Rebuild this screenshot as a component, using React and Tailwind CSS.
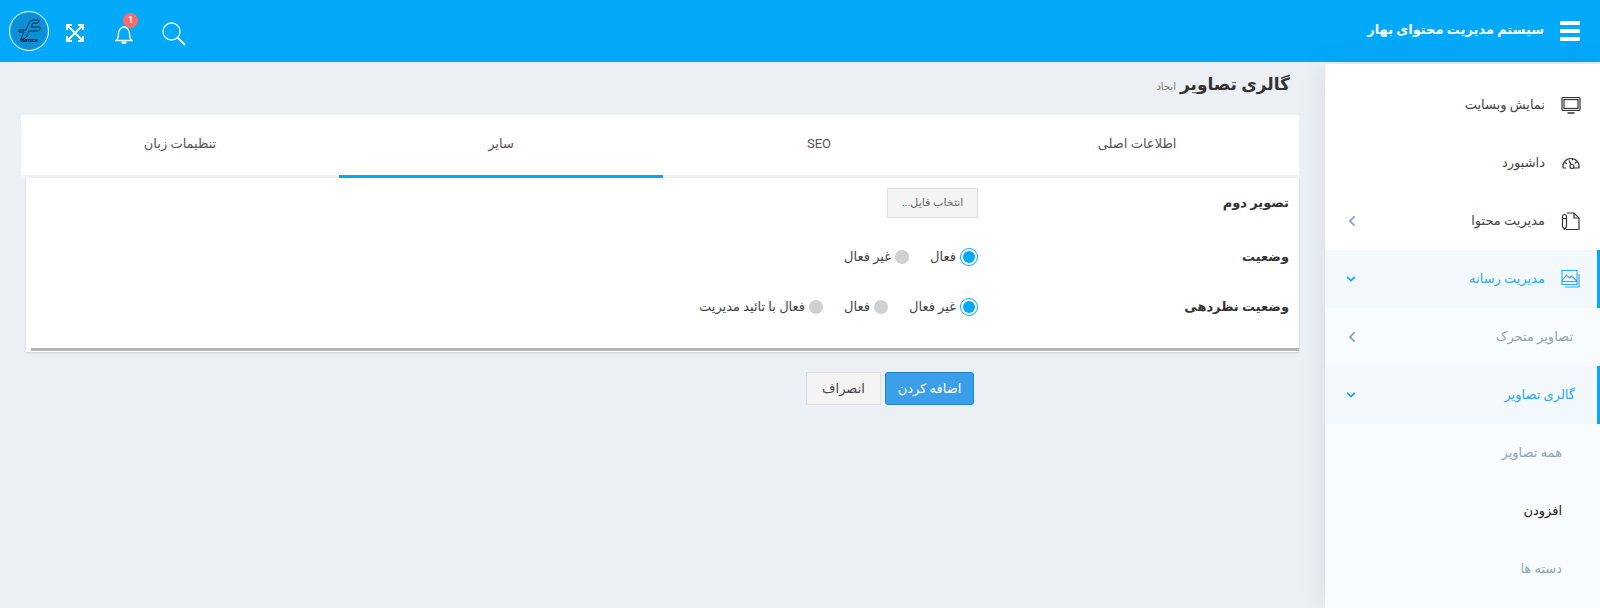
import React from 'react';
import { FaChevronLeft, FaChevronDown } from 'react-icons/fa';

const fontStack = { fontFamily: 'Roboto, "DejaVu Sans", sans-serif' };

const MonitorIcon = () => (
  <svg width="20" height="20" viewBox="0 0 20 20" fill="none" stroke="#333" strokeWidth="1.2">
    <rect x="1" y="2.5" width="18" height="13" rx="1" />
    <rect x="3" y="4.5" width="14" height="9" />
    <path d="M6.5 18h7" strokeWidth="1.5" />
  </svg>
);

const GaugeIcon = () => (
  <svg width="20" height="20" viewBox="0 0 20 20" fill="none" stroke="#333" strokeWidth="1.2">
    <path d="M5 15H2.2C.9 10.5 4.500 5.500 10 5.500S19.100 10.500 17.800 15H13" />
    <circle cx="11" cy="13.500" r="2" />
    <path d="M10.200 11.600 8 7.500M4 9.500l2 1.500M15.500 9l-1.500 1.500M11.500 6v1.500" />
  </svg>
);

const DocIcon = () => (
  <svg width="20" height="20" viewBox="0 0 20 20" fill="none" stroke="#333" strokeWidth="1.2">
    <path d="M6 2h7l5 5v11.500H5" />
    <path d="M13 2v5h5" />
    <path d="M1.500 5.500a2 2 0 0 1 4 0v10l-2 3-2-3z" />
    <path d="M1.500 7.500h4" />
  </svg>
);

const ImagesIcon = () => (
  <svg width="20" height="20" viewBox="0 0 20 20" fill="none" stroke="#2ba8f5" strokeWidth="1.1">
    <rect x="1" y="1.500" width="15" height="14" />
    <path d="M1 11.500 5.500 6l3 3 2-2 5.500 5" />
    <path d="M1 12.500h15" />
    <path d="M18 5v13H4" />
  </svg>
);

const SearchIcon = () => (
  <svg width="26" height="26" viewBox="0 0 26 26" fill="none" stroke="#fff" strokeWidth="1.300">
    <circle cx="10.500" cy="10.500" r="8.500" />
    <path d="M16.500 16.500l7.500 7.500" strokeWidth="1.800" />
  </svg>
);

const BellIcon = () => (
  <svg width="18" height="20" viewBox="0 0 18 20" fill="none" stroke="#fff" strokeWidth="1.300">
    <path d="M1 16.500c2-1.500 2.500-3 2.500-6.500 0-4 2.500-7 5.500-7s5.500 3 5.500 7c0 3.500.5 5 2.500 6.500z" />
    <path d="M7 17.500a2 2 0 0 0 4 0" fill="#fff" />
  </svg>
);

const ExpandIcon = () => (
  <svg width="18" height="18" viewBox="0 0 18 18" fill="none" stroke="#fff" strokeWidth="2">
    <path d="M2 2l14 14M16 2 2 16" />
    <path d="M1 6V1h5M12 1h5v5M17 12v5h-5M6 17H1v-5" />
  </svg>
);

const LogoMark = () => (
  <div className="w-10 h-10 rounded-full border-[1.5px] border-white p-[1px] shrink-0">
    <div className="relative w-full h-full rounded-full bg-[#0b8fd6] overflow-hidden">
      <svg width="35" height="35" viewBox="0 0 35 35" fill="none" stroke="#06304f" strokeWidth="1">
        <path d="M9 17h6l3-7c1-2 3-3 5-3h5l-1 3h-5l-2 4h9c1 2-1 4-3 4h-8l-3 6c-1 2-3 2-5 2l3-7H8c-1-1 0-2 1-2z" />
      </svg>
      <span className="absolute left-0 right-0 top-[25px] text-center text-[4px] leading-[5px] font-bold text-black" dir="ltr">
        FARTECH
      </span>
    </div>
  </div>
);

const menuItems = [
  { label: 'نمایش وبسایت', icon: <MonitorIcon />, tone: 'top' },
  { label: 'داشبورد', icon: <GaugeIcon />, tone: 'top' },
  { label: 'مدیریت محتوا', icon: <DocIcon />, tone: 'top', arrow: 'left' },
  { label: 'مدیریت رسانه', icon: <ImagesIcon />, tone: 'active', arrow: 'down' },
  { label: 'تصاویر متحرک', tone: 'sub', arrow: 'left' },
  { label: 'گالری تصاویر', tone: 'subActive', arrow: 'down' },
  { label: 'همه تصاویر', tone: 'leaf' },
  { label: 'افزودن', tone: 'leafCurrent' },
  { label: 'دسته ها', tone: 'leaf' },
];

const SidebarRow = ({ item }) => {
  const isActive = item.tone === 'active' || item.tone === 'subActive';
  const rowBg = item.tone === 'top' ? 'bg-white' : isActive ? 'bg-[#f3f8fc] border-r-[3px] border-[#03a9f9]' : 'bg-[#f8fcff]';
  const textColor = isActive
    ? 'text-[#2ba8f5]'
    : item.tone === 'top'
      ? 'text-[#444]'
      : item.tone === 'leafCurrent'
        ? 'text-[#222]'
        : 'text-[#8fa5b3]';
  const pad = item.icon ? (isActive ? 'pr-[16px]' : 'pr-[19px]') : item.tone === 'sub' ? 'pr-[27px]' : item.tone === 'subActive' ? 'pr-[22px]' : 'pr-[38px]';

  return (
    <div className={`h-[58px] flex items-center ${pad} pl-[20px] ${rowBg}`}>
      {item.icon && <span className="w-[20px] h-[20px] ml-[16px] shrink-0">{item.icon}</span>}
      <span className={`text-[13px] ${textColor}`}>{item.label}</span>
      <span className="flex-1" />
      {item.arrow === 'left' && <FaChevronLeft className="w-[10px] h-[12px] text-[#93a7b4] ml-[2px]" />}
      {item.arrow === 'down' && <FaChevronDown className="w-[12px] h-[10px] text-[#0ea5f5]" />}
    </div>
  );
};

const Radio = ({ label, checked }) => (
  <label className="flex items-center">
    {checked ? (
      <span className="w-[18px] h-[18px] rounded-full border border-[#03a9f9] p-[2px] bg-white shrink-0">
        <span className="block w-full h-full rounded-full bg-[#03a9f9]" />
      </span>
    ) : (
      <span className="w-[14px] h-[14px] rounded-full bg-[#d0d0d0] shrink-0" />
    )}
    <span className="text-[13px] text-[#444] mr-[4px]">{label}</span>
  </label>
);

const FormRow = ({ label, className, children }) => (
  <div className={`flex items-center ${className}`}>
    <div className="w-[321px] pr-[10px] text-[13px] font-bold text-[#333] shrink-0">{label}</div>
    <div className="flex items-center gap-[21px]">{children}</div>
  </div>
);

const tabs = [
  { label: 'اطلاعات اصلی', width: 'w-[324px]' },
  { label: 'SEO', width: 'w-[312px]' },
  { label: 'سایر', width: 'w-[324px]', active: true },
  { label: 'تنظیمات زبان', width: 'w-[318px]' },
];

export default function App() {
  return (
    <div dir="rtl" className="h-[608px] overflow-hidden bg-[#ecf0f5]" style={fontStack}>
      <header className="h-[62px] bg-[#03a9f9] flex items-center pr-[20px] pl-[9px]">
        <div className="flex flex-col gap-[4px] w-[20px] shrink-0">
          <span className="h-[4px] bg-white" />
          <span className="h-[4px] bg-white" />
          <span className="h-[4px] bg-white" />
        </div>
        <h1 className="text-[13px] font-bold text-white mr-[16px] pb-[2px]">سیستم مدیریت محتوای بهار</h1>
        <div className="flex-1" />
        <div className="flex items-center" dir="ltr">
          <LogoMark />
          <span className="ml-[17px] mt-[3px]"><ExpandIcon /></span>
          <div className="relative ml-[31px] mt-[6px]">
            <BellIcon />
            <span className="absolute -top-[11px] left-[8px] w-[15px] h-[15px] rounded-full bg-[#ff6b6b] text-white text-[9px] font-bold flex items-center justify-center">1</span>
          </div>
          <span className="ml-[28px] mt-[6px]"><SearchIcon /></span>
        </div>
      </header>

      <div className="flex mt-[2px]">
        <aside className="w-[275px] h-[546px] bg-[#f8fcff] shrink-0 shadow-[0_0_24px_rgba(60,80,100,0.12)] z-10">
          <div className="bg-white h-[12px]" />
          {menuItems.map((item) => <SidebarRow key={item.label} item={item} />)}
        </aside>

        <main className="flex-1 pr-[26px] pl-[21px]">
          <div className="flex items-baseline h-[51px] pt-[8px] pr-[9px]">
            <h2 className="text-[17px] font-bold text-[#333]">گالری تصاویر</h2>
            <span className="text-[10px] text-[#777] mr-[4px]">ایجاد</span>
          </div>

          <div className="flex h-[63px] bg-white rounded-t-[2px]">
            {tabs.map((tab) => (
              <div
                key={tab.label}
                className={`${tab.width} pb-[3px] flex items-center justify-center text-[13px] text-[#555] border-b-[3px] ${tab.active ? 'border-[#03a9f9]' : 'border-[#f2f2f2]'}`}
              >
                {tab.label}
              </div>
            ))}
          </div>

          <section className="ml-0 mr-0 ml-[5px] bg-white h-[174px] pt-[10px] shadow-[0_1px_2px_rgba(0,0,0,0.15)] flex flex-col">
            <FormRow label="تصویر دوم" className="h-[30px]">
              <button className="w-[91px] h-[30px] bg-[#f4f4f4] border border-[#ddd] text-[11px] text-[#666]">انتخاب فایل...</button>
            </FormRow>
            <FormRow label="وضعیت" className="h-[30px] mt-[24px]">
              <Radio label="فعال" checked />
              <Radio label="غیر فعال" />
            </FormRow>
            <FormRow label="وضعیت نظردهی" className="h-[30px] mt-[20px]">
              <Radio label="غیر فعال" checked />
              <Radio label="فعال" />
              <Radio label="فعال با تائید مدیریت" />
            </FormRow>
            <div className="flex-1" />
            <div className="h-[3px] bg-[#b5b5b5] ml-[5px] mb-[1px]" />
          </section>

          <div className="flex gap-[4px] mt-[20px] pr-[325px]">
            <button className="w-[89px] h-[33px] rounded-[3px] bg-[#3a9ee8] border border-[#1b86c9] text-white text-[13px]">اضافه کردن</button>
            <button className="w-[75px] h-[33px] bg-[#f4f4f4] border border-[#ddd] text-[#444] text-[13px]">انصراف</button>
          </div>
        </main>
      </div>
    </div>
  );
}
